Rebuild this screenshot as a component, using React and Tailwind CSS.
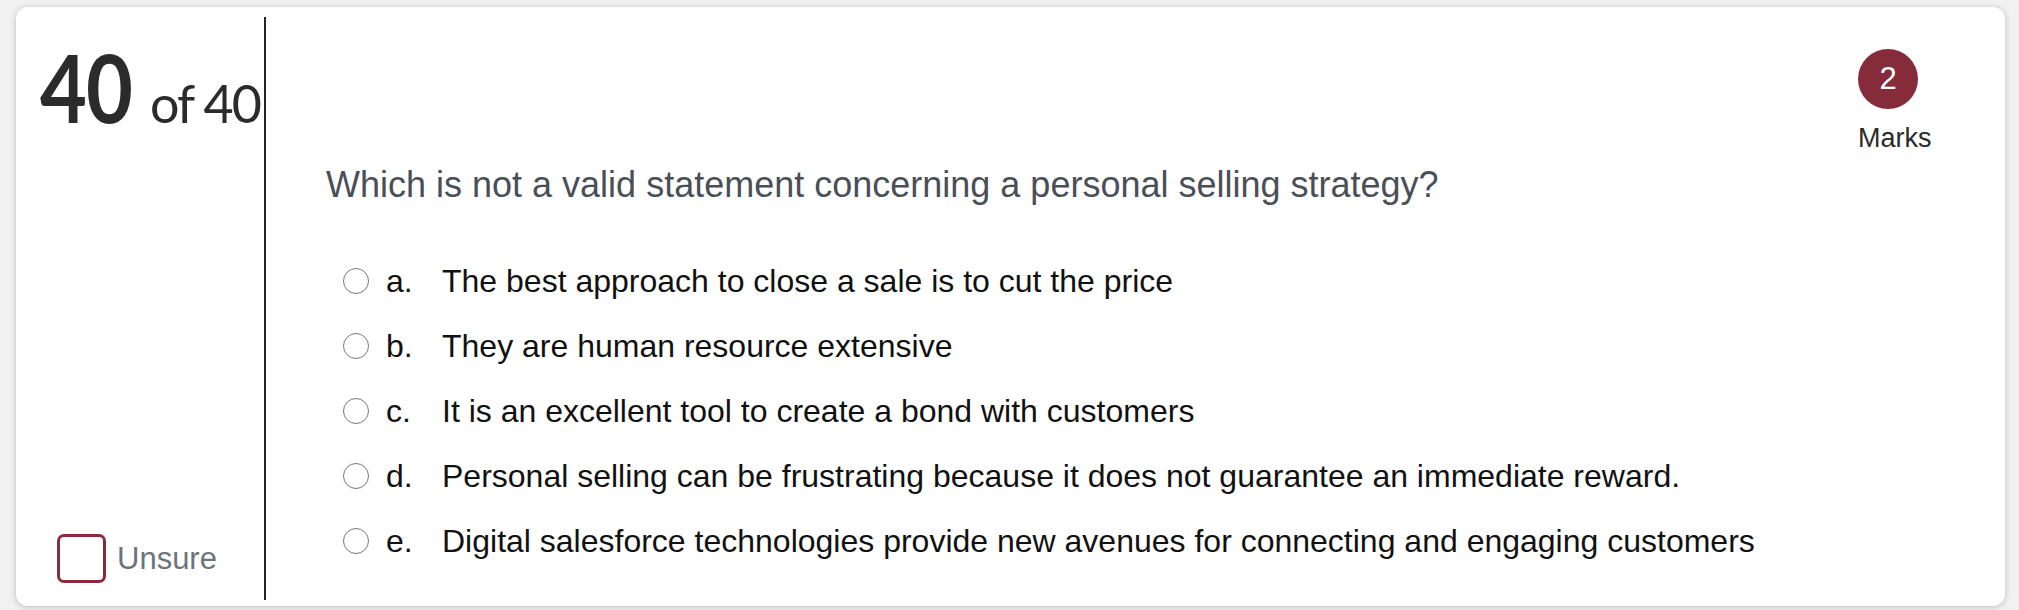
const options = [
  { letter: 'a.', text: 'The best approach to close a sale is to cut the price' },
  { letter: 'b.', text: 'They are human resource extensive' },
  { letter: 'c.', text: 'It is an excellent tool to create a bond with customers' },
  { letter: 'd.', text: 'Personal selling can be frustrating because it does not guarantee an immediate reward.' },
  { letter: 'e.', text: 'Digital salesforce technologies provide new avenues for connecting and engaging customers' },
];

const QuestionCard = () => {
  return (
    <div className="h-[610px] w-full bg-[#f1f1f1] pt-[7px] pl-[16px] pr-[14px]">
      <div className="flex h-[599px] rounded-[12px] bg-white shadow-[0_1px_6px_rgba(0,0,0,0.22)]">
        {/* question number + unsure */}
        <div className="flex w-[248px] flex-col justify-between pt-[10px] pb-[6px]">
          <div className="flex items-baseline whitespace-nowrap pl-[24px] pt-[20px] text-[#2b2b2b] font-['Lato',sans-serif]">
            <span className="mr-[-15px] inline-block origin-left scale-x-[0.86] text-[94px] font-bold leading-[100px] tracking-[-1px]">
              40
            </span>
            <span className="ml-[18px] text-[52px] leading-[60px] tracking-[-2px]">of 40</span>
          </div>
          <label className="mb-[17px] flex items-center gap-[11px] pl-[41px] font-['Liberation_Sans',Arial,sans-serif]">
            <span className="h-[49px] w-[49px] rounded-[7px] border-[3px] border-[#8a2b3b] bg-white" />
            <span className="text-[31px] leading-[40px] text-[#6e737a]">Unsure</span>
          </label>
        </div>

        <div className="my-[10px] mb-[6px] w-[2px] bg-[#222]" />

        {/* question body */}
        <div className="flex flex-1 font-['Liberation_Sans',Arial,sans-serif]">
          <div className="flex-1 pl-[60px] pt-[158px]">
            <h2 className="text-[36px] leading-[40px] text-[#4a4f57]">
              Which is not a valid statement concerning a personal selling strategy?
            </h2>
            <ul className="mt-[43px]">
              {options.map((opt) => (
                <li key={opt.letter} className="flex h-[65px] items-center">
                  <span className="ml-[17px] h-[26px] w-[26px] rounded-full border-[1.5px] border-[#777] bg-white" />
                  <span className="ml-[17px] w-[56px] text-[32px] leading-[36px] text-[#111]">{opt.letter}</span>
                  <span className="text-[32px] leading-[36px] text-[#111]">{opt.text}</span>
                </li>
              ))}
            </ul>
          </div>

          <div className="flex w-[147px] flex-col items-start pt-[42px]">
            <div className="flex h-[60px] w-[60px] items-center justify-center rounded-full bg-[#862b3a] text-[31px] text-white">
              2
            </div>
            <div className="mt-[13px] text-[27px] leading-[32px] text-[#2b2b2b]">Marks</div>
          </div>
        </div>
      </div>
    </div>
  );
};

export default function App() {
  return <QuestionCard />;
}
